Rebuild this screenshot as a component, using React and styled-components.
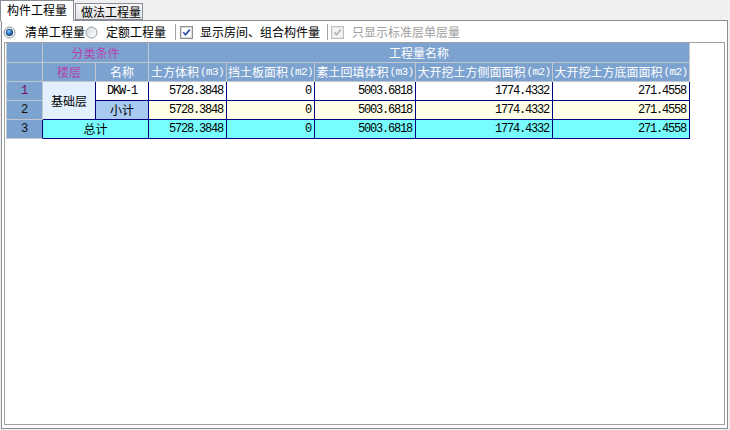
import React from "react";
import styled, { createGlobalStyle } from "styled-components";

const Global = createGlobalStyle`
  * { box-sizing: border-box; }
  html, body { margin: 0; padding: 0; background: #f0f0f0; }
  body { font-family: "Noto Sans CJK SC", "Noto Sans", sans-serif; font-size: 12px; color: #000; }
`;

const Page = styled.div`
  width: 730px;
  height: 430px;
  background: #f0f0f0;
  overflow: hidden;
`;

const TabStrip = styled.div`
  display: flex;
  align-items: flex-end;
  height: 20px;
`;

const Tab = styled.div`
  position: relative;
  z-index: ${(p) => (p.$active ? 1 : 0)};
  height: ${(p) => (p.$active ? "21px" : "17px")};
  width: ${(p) => p.$w}px;
  margin-left: ${(p) => p.$ml || 0}px;
  margin-bottom: ${(p) => (p.$active ? "-1px" : "0")};
  border: 1px solid #8a8d96;
  border-bottom: ${(p) => (p.$active ? "none" : "1px solid #8a8d96")};
  background: ${(p) => (p.$active ? "#fff" : "linear-gradient(#f6f6f6, #e4e4e4)")};
  display: flex;
  align-items: center;
  padding-left: ${(p) => p.$pl}px;
  padding-bottom: ${(p) => (p.$active ? "3px" : "0")};
  font-size: 12px;
  line-height: 12px;
  white-space: nowrap;
`;

const Panel = styled.div`
  margin-left: 1px;
  width: 727px;
  height: 409px;
  border: 1px solid #8a8d96;
  background: #fff;
  display: flex;
  flex-direction: column;
`;

const Toolbar = styled.div`
  height: 21px;
  display: flex;
  align-items: center;
  padding-left: 1px;
  padding-top: 1px;
  white-space: nowrap;
`;

const Label = styled.span`
  margin-left: ${(p) => p.$ml || 0}px;
  color: ${(p) => (p.$disabled ? "#a0a0a0" : "#000")};
  font-size: 12px;
  line-height: 14px;
`;

const Icon = styled.svg`
  flex: none;
  display: block;
  margin-left: ${(p) => p.$ml || 0}px;
`;

const Separator = styled.span`
  flex: none;
  width: 2px;
  height: 16px;
  margin-left: ${(p) => p.$ml || 0}px;
  border-left: 1px solid #a0a0a0;
  border-right: 1px solid #ffffff;
`;

const GridBox = styled.div`
  margin: 0 2px 3px 2px;
  flex: 1;
  border: 1px solid #a0a0a0;
  background: #fff;
  padding-left: 1px;
`;

const Grid = styled.div`
  display: grid;
  width: 684px;
  grid-template-columns: 37px 53px 53px 78px 88px 101px 137px 137px;
  grid-template-rows: 20px 19px 19px 19px 19px;
`;

const Cell = styled.div`
  grid-column: ${(p) => p.$col};
  grid-row: ${(p) => p.$row};
  display: flex;
  align-items: center;
  justify-content: ${(p) => p.$justify || "center"};
  white-space: nowrap;
  overflow: hidden;
  font-size: 12px;
  line-height: 14px;
`;

const HeadCell = styled(Cell)`
  background: #7ca2d0;
  color: ${(p) => p.$color || "#ffffff"};
  border-right: 1px solid #c4c8cc;
  border-bottom: 1px solid #c4c8cc;
`;

const RowNum = styled(Cell)`
  background: #7ca2d0;
  color: ${(p) => p.$color || "#101010"};
  border-left: 1px solid #c4c8cc;
  border-right: 1px solid ${(p) => (p.$navy ? "#000080" : "#c4c8cc")};
  border-bottom: 1px solid #c4c8cc;
  font-family: "Liberation Mono", monospace;
  font-size: 12px;
`;

const DataCell = styled(Cell)`
  background: ${(p) => p.$bg};
  border-right: 1px solid #000080;
  border-bottom: 1px solid #000080;
  padding-right: ${(p) => (p.$justify === "flex-end" ? "3px" : "0")};
`;

const Mono = styled.span`
  font-family: "Liberation Mono", "DejaVu Sans Mono", monospace;
  font-size: 12px;
  letter-spacing: -1.2px;
`;

const Unit = styled.span`
  font-family: "Liberation Mono", "DejaVu Sans Mono", monospace;
  font-size: 11px;
  letter-spacing: -0.6px;
  margin-left: 1px;
`;

function Radio({ checked, ml }) {
  return (
    <Icon width="13" height="13" viewBox="0 0 13 13" $ml={ml}>
      <defs>
        <linearGradient id={checked ? "rgA" : "rgB"} x1="0" y1="0" x2="1" y2="1">
          <stop offset="0" stopColor="#d6d8da" />
          <stop offset="1" stopColor="#ffffff" />
        </linearGradient>
        <radialGradient id="dot" cx="0.4" cy="0.35" r="0.7">
          <stop offset="0" stopColor="#8fd0ff" />
          <stop offset="0.5" stopColor="#2a7ad6" />
          <stop offset="1" stopColor="#14407a" />
        </radialGradient>
      </defs>
      <circle cx="6.5" cy="6.5" r="5.5" fill={`url(#${checked ? "rgA" : "rgB"})`} stroke="#8e9aa6" />
      {checked && <circle cx="6.5" cy="6.5" r="3.3" fill="url(#dot)" stroke="#1a2f55" strokeWidth="0.6" />}
    </Icon>
  );
}

function Check({ disabled, ml }) {
  return (
    <Icon width="13" height="13" viewBox="0 0 13 13" $ml={ml}>
      <rect x="0.5" y="0.5" width="12" height="12" fill={disabled ? "#f4f4f4" : "#ffffff"} stroke={disabled ? "#c0c0c0" : "#8e8f8f"} />
      <rect x="1.5" y="1.5" width="10" height="10" fill="none" stroke={disabled ? "#e6e6e6" : "#dcdcdc"} />
      <path d="M3.3 6.3 L5.5 8.8 L9.8 3.6" fill="none" stroke={disabled ? "#b4b4b4" : "#2a4fa8"} strokeWidth="1.7" />
    </Icon>
  );
}

const units = [
  ["土方体积", "(m3)"],
  ["挡土板面积", "(m2)"],
  ["素土回填体积", "(m3)"],
  ["大开挖土方侧面面积", "(m2)"],
  ["大开挖土方底面面积", "(m2)"],
];

const values = ["5728.3848", "0", "5003.6818", "1774.4332", "271.4558"];

const rows = [
  { n: "1", bg: "#ffffff", color: "#7a0c60" },
  { n: "2", bg: "#fffee6" },
  { n: "3", bg: "#77fdfd", navy: true },
];

export default function App() {
  return (
    <Page>
      <Global />
      <TabStrip>
        <Tab $active $w={74} $pl={6}>构件工程量</Tab>
        <Tab $w={68} $ml={1} $pl={5}>做法工程量</Tab>
      </TabStrip>
      <Panel>
        <Toolbar>
          <Radio checked />
          <Label $ml={9}>清单工程量</Label>
          <Radio />
          <Label $ml={8}>定额工程量</Label>
          <Separator $ml={9} />
          <Check ml={3} />
          <Label $ml={7}>显示房间、组合构件量</Label>
          <Separator $ml={7} />
          <Check disabled ml={2} />
          <Label $ml={8} $disabled>只显示标准层单层量</Label>
        </Toolbar>
        <GridBox>
          <Grid>
            <RowNum $col="1" $row="1" />
            <HeadCell $col="2 / span 2" $row="1" $color="#b444b0">分类条件</HeadCell>
            <HeadCell $col="4 / span 5" $row="1">工程量名称</HeadCell>

            <RowNum $col="1" $row="2" />
            <HeadCell $col="2" $row="2" $color="#b444b0">楼层</HeadCell>
            <HeadCell $col="3" $row="2">名称</HeadCell>
            {units.map(([t, u], i) => (
              <HeadCell key={t} $col={`${i + 4}`} $row="2">
                {t}
                <Unit>{u}</Unit>
              </HeadCell>
            ))}

            {rows.map((r, ri) => (
              <RowNum key={"n" + r.n} $col="1" $row={`${ri + 3}`} $color={r.color} $navy={r.navy}>
                {r.n}
              </RowNum>
            ))}

            <DataCell $col="2" $row="3 / span 2" $bg="#e2f0ff">基础层</DataCell>
            <DataCell $col="3" $row="3" $bg="#ffffff"><Mono>DKW-1</Mono></DataCell>
            <DataCell $col="3" $row="4" $bg="#a8c9f0">小计</DataCell>
            <DataCell $col="2 / span 2" $row="5" $bg="#77fdfd">总计</DataCell>

            {rows.map((r, ri) =>
              values.map((v, vi) => (
                <DataCell
                  key={r.n + "-" + vi}
                  $col={`${vi + 4}`}
                  $row={`${ri + 3}`}
                  $bg={r.bg}
                  $justify="flex-end"
                >
                  <Mono>{v}</Mono>
                </DataCell>
              ))
            )}
          </Grid>
        </GridBox>
      </Panel>
    </Page>
  );
}
